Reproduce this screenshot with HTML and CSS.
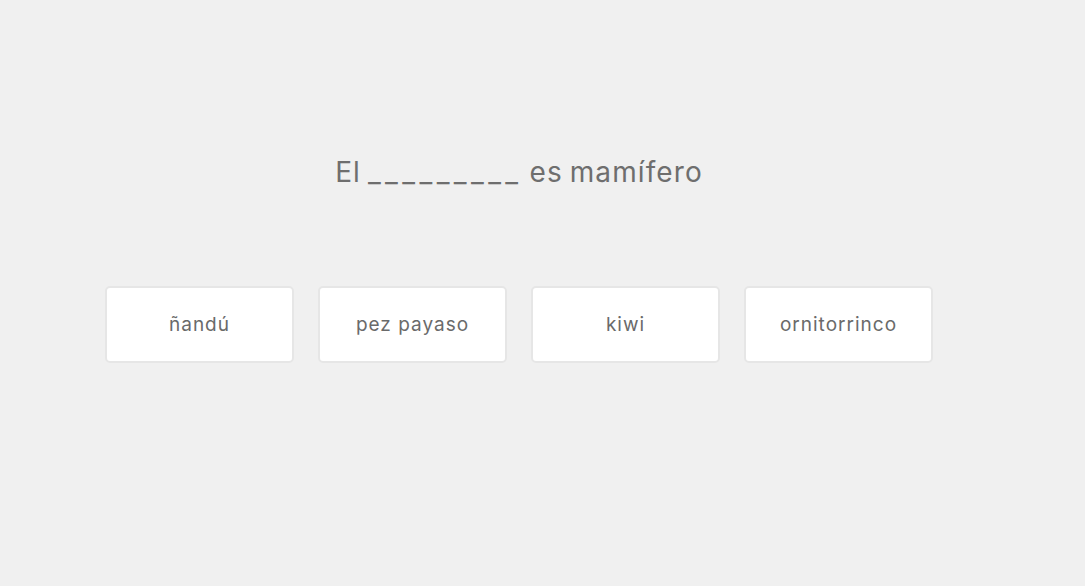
FILE: index.html
```html
<!DOCTYPE html>
<html lang="es">
<head>
<meta charset="utf-8">
<link rel="stylesheet" href="styles.css">
</head>
<body>
<main class="quiz">
  <h1 class="question">El <span class="blank">_________</span> es mamífero</h1>
  <div class="options">
    <button class="option">ñandú</button>
    <button class="option">pez payaso</button>
    <button class="option">kiwi</button>
    <button class="option">ornitorrinco</button>
  </div>
</main>
</body>
</html>
```

FILE: styles.css
```css
html, body {
  margin: 0;
  padding: 0;
  background: #f0f0f0;
  height: 100%;
}
body {
  font-family: "Inter", "Open Sans", sans-serif;
  color: #6f6f6f;
}
.quiz {
  width: 1038px;
  display: flex;
  flex-direction: column;
  align-items: center;
  padding-top: 153px;
}
.question {
  margin: 0;
  font-size: 28px;
  font-weight: 400;
  line-height: 38px;
  letter-spacing: 1.1px;
  word-spacing: -2px;
  color: #6e6e6e;
}
.blank {
  letter-spacing: 4.4px;
}
.options {
  display: flex;
  gap: 24px;
  margin-top: 95px;
}
.option {
  width: 189px;
  height: 77px;
  box-sizing: border-box;
  background: #fff;
  border: 2px solid #e6e6e6;
  border-radius: 5px;
  font-family: inherit;
  font-size: 19px;
  letter-spacing: 1px;
  color: #6a6a6a;
  padding: 0;
}
```
